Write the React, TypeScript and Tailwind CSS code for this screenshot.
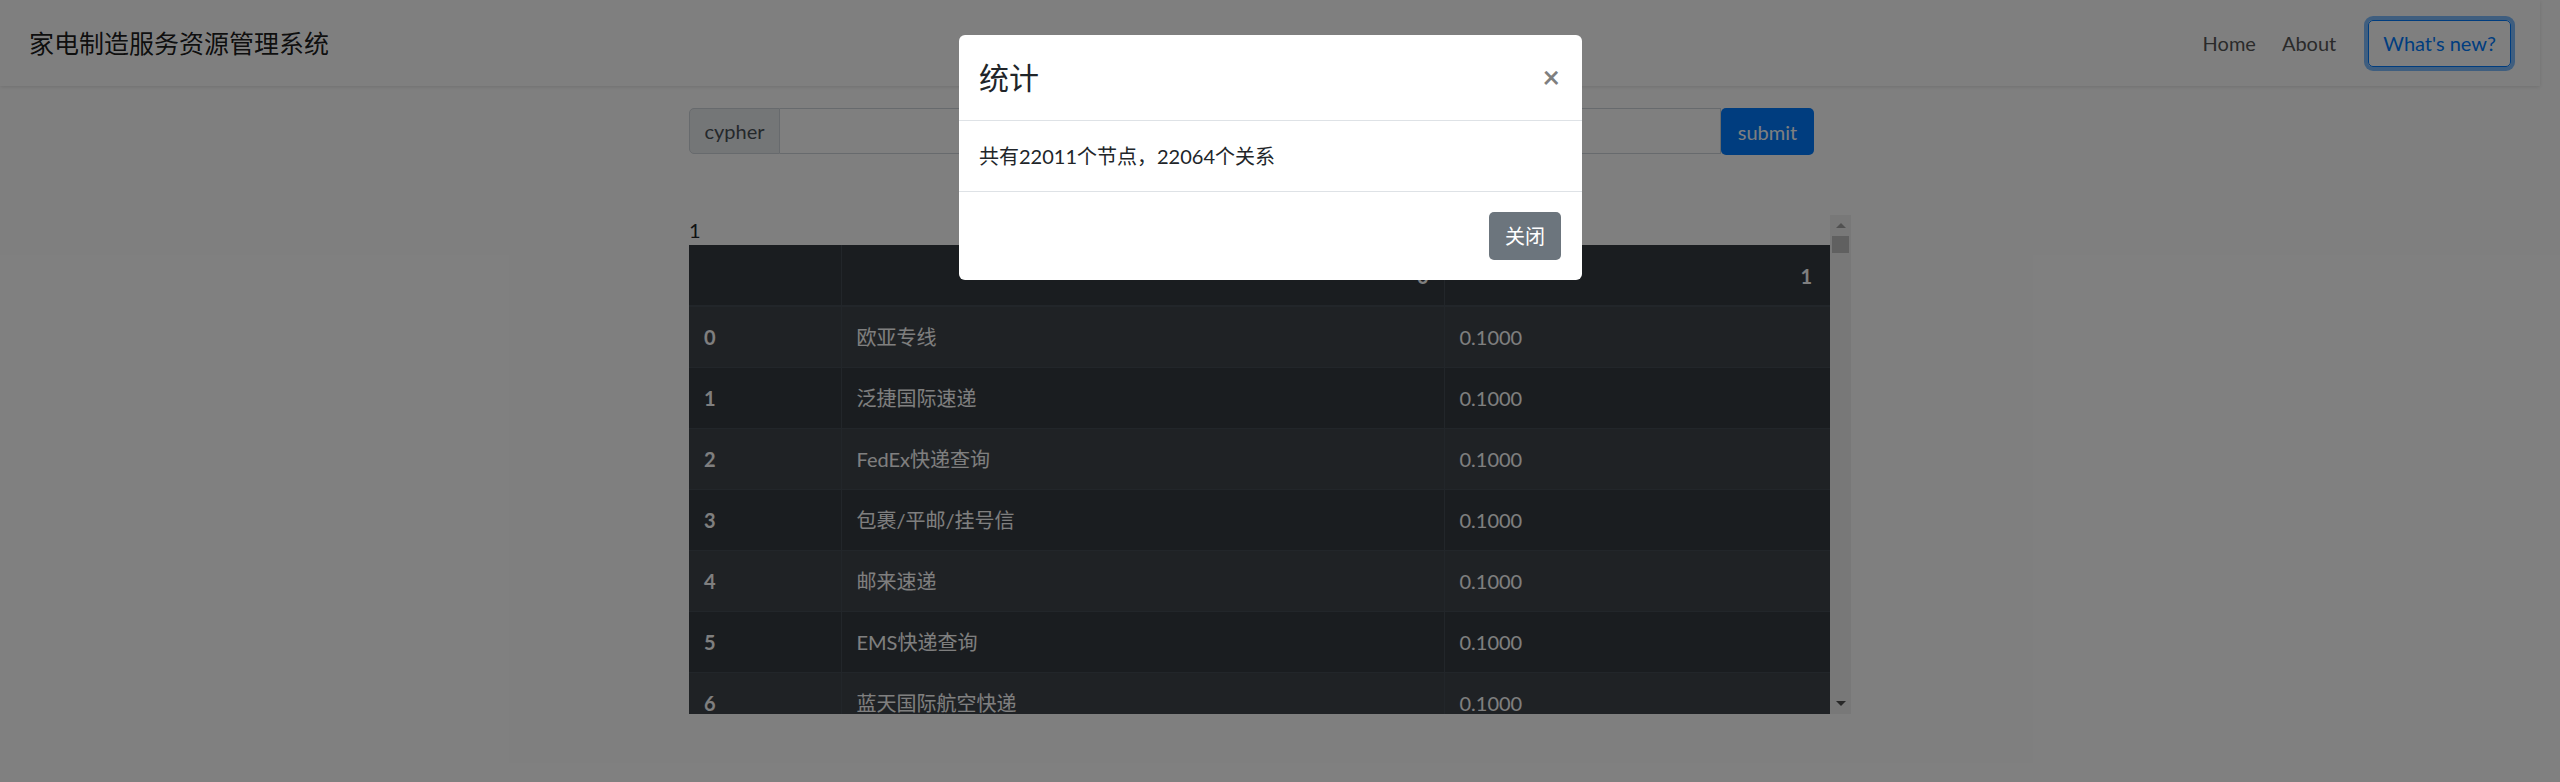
import React from 'react';

const rows = [
  { idx: 0, name: '欧亚专线', val: '0.1000' },
  { idx: 1, name: '泛捷国际速递', val: '0.1000' },
  { idx: 2, name: 'FedEx快递查询', val: '0.1000' },
  { idx: 3, name: '包裹/平邮/挂号信', val: '0.1000' },
  { idx: 4, name: '邮来速递', val: '0.1000' },
  { idx: 5, name: 'EMS快递查询', val: '0.1000' },
  { idx: 6, name: '蓝天国际航空快递', val: '0.1000' },
  { idx: 7, name: '顺丰速运', val: '0.1000' },
  { idx: 8, name: '中通快递', val: '0.1000' },
];

const font = { fontFamily: 'Lato, "Noto Sans CJK SC", sans-serif' };

const Navbar = () => (
  <nav className="w-[2540px] h-[86px] shrink-0 bg-white shadow-[0_1px_4px_rgba(0,0,0,0.12)] flex items-center justify-between px-[29px]">
    <span className="text-[25px] leading-[37px] text-black/90">家电制造服务资源管理系统</span>
    <div className="flex items-center">
      <a className="px-[8px] text-[20px] leading-[30px] text-[#555]">Home</a>
      <a className="ml-[10px] px-[8px] text-[20px] leading-[30px] text-[#555]">About</a>
      <button className="ml-[24px] h-[47px] px-[14px] text-[20px] leading-[30px] text-[#007bff] border border-[#007bff] rounded-[5px] ring-4 ring-[#007bff]/50">
        What's new?
      </button>
    </div>
  </nav>
);

const SearchBar = () => (
  <div className="flex w-[1125px] h-[46px]">
    <span className="w-[91px] flex items-center justify-center bg-[#e9ecef] border border-[#ced4da] rounded-l-[5px] text-[20px] text-[#495057]">
      cypher
    </span>
    <div className="flex-1 bg-white border border-l-0 border-[#ced4da]" />
    <button className="w-[93px] h-[47px] bg-[#007bff] text-white text-[20px] rounded-[5px]">submit</button>
  </div>
);

const ResultTable = () => (
  <div className="flex h-[499px] w-[1162px]">
    <div className="w-[1141px] overflow-hidden">
      <div className="h-[30px] text-[20px] leading-[30px] text-[#212529]">1</div>
      <table className="w-[1141px] border-collapse text-white text-[20px] leading-[30px] table-fixed">
        <colgroup>
          <col className="w-[152px]" />
          <col className="w-[603px]" />
          <col className="w-[386px]" />
        </colgroup>
        <thead className="bg-[#343a40]">
          <tr className="h-[61px] text-right">
            <th className="align-bottom pb-[14px] border-b-2 border-[#454d55] px-[15px]"></th>
            <th className="align-bottom pb-[14px] border-b-2 border-l border-[#454d55] px-[15px] font-bold">0</th>
            <th className="align-bottom pb-[14px] border-b-2 border-l border-[#454d55] px-[15px] pr-[18px] font-bold">1</th>
          </tr>
        </thead>
        <tbody>
          {rows.map((r) => (
            <tr
              key={r.idx}
              className={`h-[61px] ${r.idx % 2 === 0 ? 'bg-[#3e444a]' : 'bg-[#343a40]'}`}
            >
              <th className="border-t border-[#454d55] px-[15px] text-left font-bold">{r.idx}</th>
              <td className="border-t border-l border-[#454d55] px-[15px]">{r.name}</td>
              <td className="border-t border-l border-[#454d55] px-[15px]">{r.val}</td>
            </tr>
          ))}
        </tbody>
      </table>
    </div>
    {/* scrollbar */}
    <div className="w-[21px] bg-[#f1f1f1] flex flex-col items-center">
      <div className="h-[21px] flex items-center justify-center">
        <div className="w-0 h-0 border-l-[5px] border-r-[5px] border-b-[5px] border-l-transparent border-r-transparent border-b-[#a3a3a3]" />
      </div>
      <div className="w-[17px] h-[17px] bg-[#c1c1c1]" />
      <div className="flex-1" />
      <div className="h-[21px] flex items-center justify-center">
        <div className="w-0 h-0 border-l-[5px] border-r-[5px] border-t-[5px] border-l-transparent border-r-transparent border-t-[#505050]" />
      </div>
    </div>
  </div>
);

const StatsModal = () => (
  <div className="absolute left-[959px] top-[35px] w-[623px] bg-white rounded-[6px] flex flex-col">
    <div className="flex items-start justify-between px-[20px] py-[20px] border-b border-[#dee2e6]">
      <h4 className="text-[30px] leading-[45px] text-[#212529]">统计</h4>
      <span className="text-[30px] leading-[30px] font-bold text-black/50 mt-[6px] mr-[2px]">×</span>
    </div>
    <div className="px-[20px] py-[20px] border-b border-[#dee2e6] text-[20px] leading-[30px] text-[#212529]">
      共有22011个节点，22064个关系
    </div>
    <div className="flex justify-end px-[21px] pt-[20px] pb-[20px]">
      <button className="w-[72px] h-[48px] bg-[#6c757d] text-white text-[20px] rounded-[5px]">关闭</button>
    </div>
  </div>
);

const App = () => {
  return (
    <div className="relative w-full h-[782px] bg-white overflow-hidden" style={font}>
      <Navbar />
      <main className="pl-[689px] pt-[22px] flex flex-col gap-[61px]">
        <SearchBar />
        <ResultTable />
      </main>
      <div className="absolute inset-0 bg-black/50" />
      <StatsModal />
    </div>
  );
};

export default App;
